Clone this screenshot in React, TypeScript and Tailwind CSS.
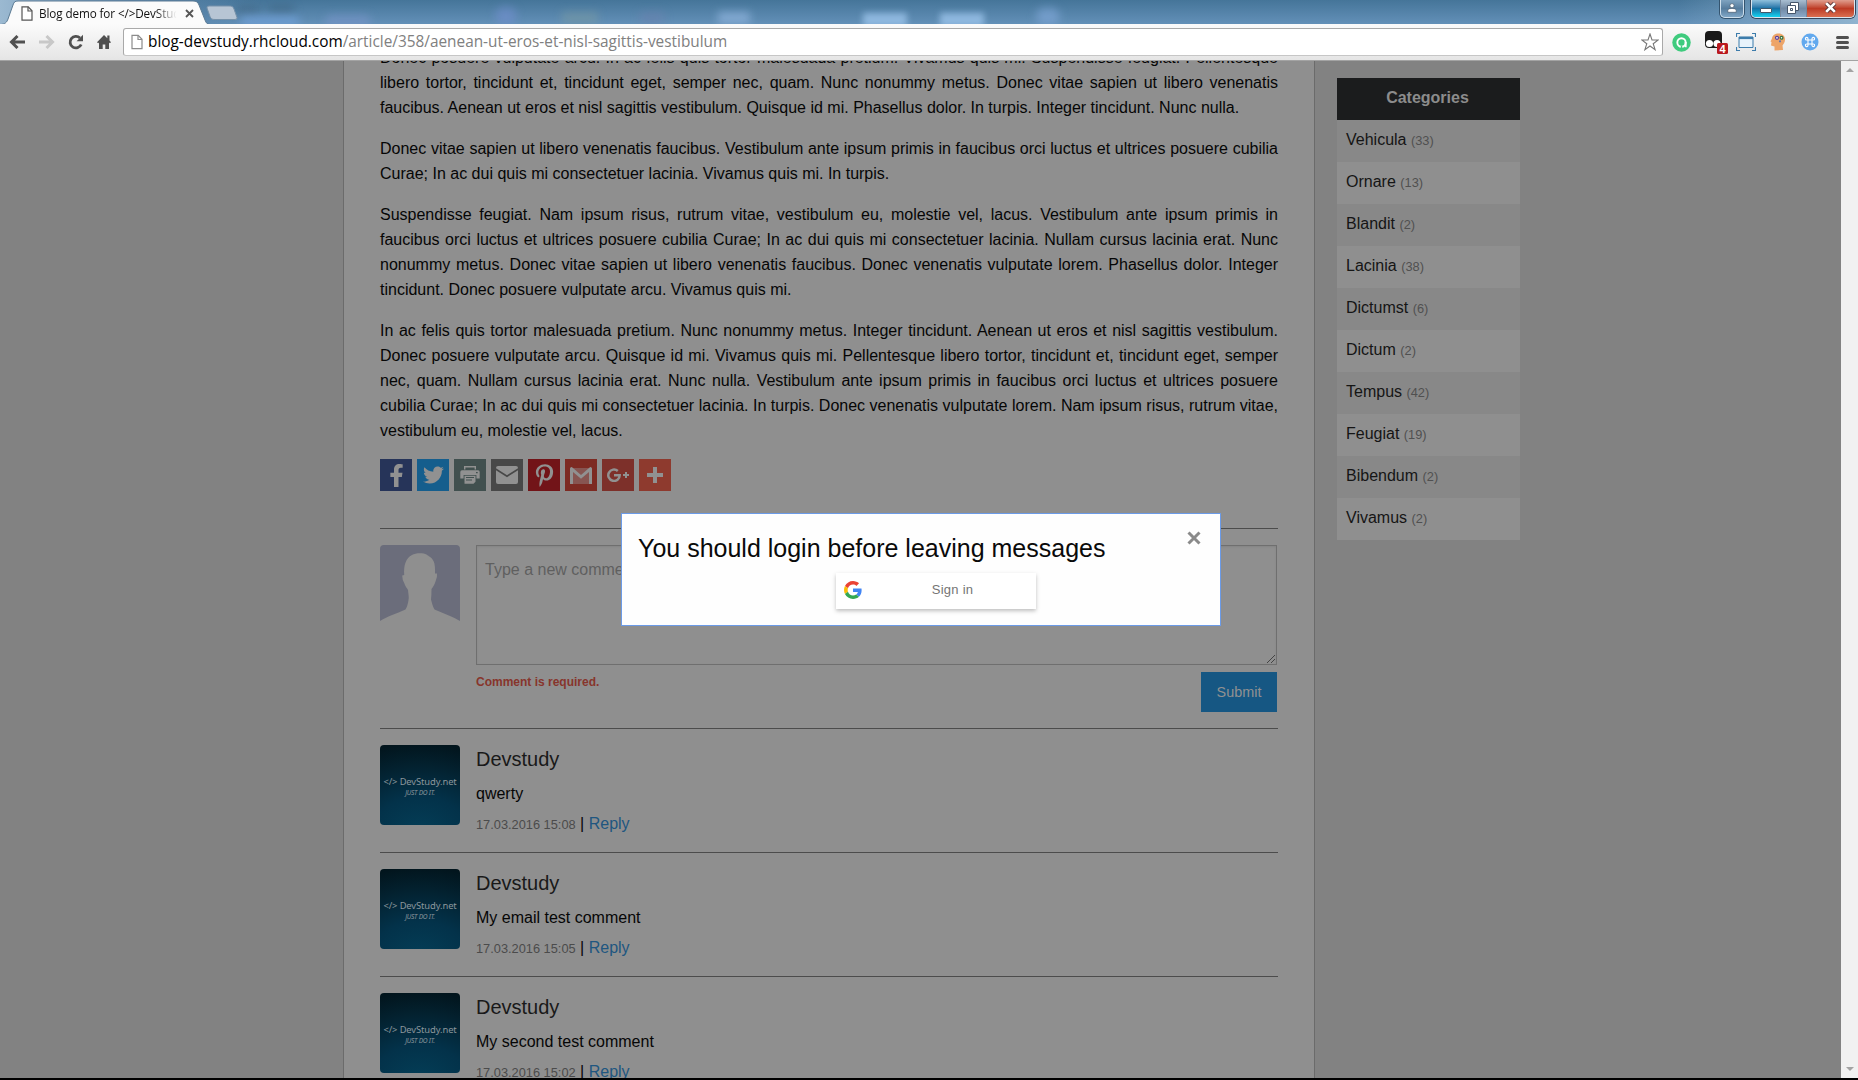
import React from 'react';
import { FaFacebookF, FaTwitter, FaPinterestP } from 'react-icons/fa';

const paragraphs: string[][] = [
  [
    'Donec posuere vulputate arcu. In ac felis quis tortor malesuada pretium. Vivamus quis mi. Suspendisse feugiat. Pellentesque',
    'libero tortor, tincidunt et, tincidunt eget, semper nec, quam. Nunc nonummy metus. Donec vitae sapien ut libero venenatis',
    'faucibus. Aenean ut eros et nisl sagittis vestibulum. Quisque id mi. Phasellus dolor. In turpis. Integer tincidunt. Nunc nulla.',
  ],
  [
    'Donec vitae sapien ut libero venenatis faucibus. Vestibulum ante ipsum primis in faucibus orci luctus et ultrices posuere cubilia',
    'Curae; In ac dui quis mi consectetuer lacinia. Vivamus quis mi. In turpis.',
  ],
  [
    'Suspendisse feugiat. Nam ipsum risus, rutrum vitae, vestibulum eu, molestie vel, lacus. Vestibulum ante ipsum primis in',
    'faucibus orci luctus et ultrices posuere cubilia Curae; In ac dui quis mi consectetuer lacinia. Nullam cursus lacinia erat. Nunc',
    'nonummy metus. Donec vitae sapien ut libero venenatis faucibus. Donec venenatis vulputate lorem. Phasellus dolor. Integer',
    'tincidunt. Donec posuere vulputate arcu. Vivamus quis mi.',
  ],
  [
    'In ac felis quis tortor malesuada pretium. Nunc nonummy metus. Integer tincidunt. Aenean ut eros et nisl sagittis vestibulum.',
    'Donec posuere vulputate arcu. Quisque id mi. Vivamus quis mi. Pellentesque libero tortor, tincidunt et, tincidunt eget, semper',
    'nec, quam. Nullam cursus lacinia erat. Nunc nulla. Vestibulum ante ipsum primis in faucibus orci luctus et ultrices posuere',
    'cubilia Curae; In ac dui quis mi consectetuer lacinia. In turpis. Donec venenatis vulputate lorem. Nam ipsum risus, rutrum vitae,',
    'vestibulum eu, molestie vel, lacus.',
  ],
];

const categories: [string, number][] = [
  ['Vehicula', 33],
  ['Ornare', 13],
  ['Blandit', 2],
  ['Lacinia', 38],
  ['Dictumst', 6],
  ['Dictum', 2],
  ['Tempus', 42],
  ['Feugiat', 19],
  ['Bibendum', 2],
  ['Vivamus', 2],
];

const comments = [
  { author: 'Devstudy', text: 'qwerty', date: '17.03.2016 15:08' },
  { author: 'Devstudy', text: 'My email test comment', date: '17.03.2016 15:05' },
  { author: 'Devstudy', text: 'My second test comment', date: '17.03.2016 15:02' },
];

function PageIcon({ className }: { className: string }) {
  return (
    <svg viewBox="0 0 12 15" className={className} fill="#fff" strokeWidth="1.2">
      <path d="M1 .8h6.2L11 4.8v9.4H1z" />
      <path d="M7 .8v4.2h4" fill="none" />
    </svg>
  );
}

function WindowButtons() {
  return (
    <div className="absolute right-[3px] top-0 flex h-[18px] items-start">
      <div className="mr-[7px] flex h-[18px] w-[24px] items-center justify-center rounded-b-[5px] border border-t-0 border-[#cfdfec] bg-gradient-to-b from-[#7fa3c0] via-[#567d9e] to-[#7fa6c6] shadow-[0_0_0_1px_#34546f]">
        <svg viewBox="0 0 10 10" className="mb-[2px] h-[10px] w-[10px]" fill="#fff" stroke="#475a6e" strokeWidth=".7">
          <circle cx="5" cy="2.7" r="2.1" />
          <path d="M.8 9.3V7.1Q.8 5.4 5 5.4t4.2 1.7v2.2z" />
        </svg>
      </div>
      <div className="flex h-[18px] overflow-hidden rounded-b-[5px] border border-t-0 border-[#dbe5ee] shadow-[0_0_0_1px_#34465c]">
        <div className="flex w-[28px] items-end justify-center bg-gradient-to-b from-[#8fc0dc] via-[#1571a5] to-[#15d3f0] pb-[4px]">
          <div className="h-[5px] w-[12px] rounded-[1px] border border-[#405769] bg-white" />
        </div>
        <div className="flex w-[27px] items-center justify-center border-x border-[#75879d] bg-gradient-to-b from-[#a9bed1] via-[#7289a4] to-[#8ba9c8]">
          <svg viewBox="0 0 13 12" className="mb-[2px] h-[12px] w-[13px]" fill="#fff" stroke="#46566b">
            <path d="M3.5.5h8v8h-8z" />
            <path d="M.5 3.5h8v8h-8zM3.500 6.500v2h2v-2z" fillRule="evenodd" />
          </svg>
        </div>
        <div className="flex w-[47px] items-center justify-center bg-gradient-to-b from-[#df9d8e] via-[#bd3a24] to-[#da6e50]">
          <svg viewBox="0 0 12 10" className="mb-[2px] h-[11px] w-[13px]">
            <path d="M2 1l8 8M10 1L2 9" stroke="#5a3436" strokeWidth="4" />
            <path d="M2 1l8 8M10 1L2 9" stroke="#fff" strokeWidth="2.5" />
          </svg>
        </div>
      </div>
    </div>
  );
}

function TitleBar() {
  return (
    <div className="relative h-[24px] overflow-hidden bg-gradient-to-b from-[#457599] to-[#6390b8]">
      <div className="absolute left-0 top-0 h-full w-[260px] bg-gradient-to-r from-[#9bb9d1] via-[#5a84a8] to-transparent" />
      <div className="absolute left-[236px] top-[6px] h-[8px] w-[24px] bg-[#35566f]/40 blur-[4px]" />
      <div className="absolute left-[268px] top-[5px] h-[8px] w-[26px] bg-[#35566f]/40 blur-[4px]" />
      <div className="absolute left-[240px] top-[16px] h-[10px] w-[60px] rounded-full bg-[#78a8e6]/60 blur-[4px]" />
      <div className="absolute left-[325px] top-[15px] h-[12px] w-[46px] rounded-full bg-[#7f98d0]/50 blur-[4px]" />
      <div className="absolute left-[495px] top-[7px] h-[18px] w-[22px] rounded-full bg-[#738fd0]/60 blur-[4px]" />
      <div className="absolute left-[562px] top-[12px] h-[12px] w-[36px] bg-[#7d9ea2]/50 blur-[4px]" />
      <div className="absolute left-[640px] top-[12px] h-[12px] w-[24px] bg-[#6b7fb0]/50 blur-[4px]" />
      <div className="absolute left-[718px] top-[12px] h-[12px] w-[32px] bg-[#93b7e0]/70 blur-[4px]" />
      <div className="absolute left-[863px] top-[13px] h-[14px] w-[44px] bg-[#93bde3]/90 blur-[3px]" />
      <div className="absolute left-[940px] top-[13px] h-[14px] w-[44px] bg-[#93bde3]/90 blur-[3px]" />
      <div className="absolute left-[1036px] top-[8px] h-[17px] w-[24px] rounded-full bg-[#83aadc]/60 blur-[4px]" />
      <div className="absolute right-0 top-0 h-full w-[180px] bg-gradient-to-l from-[#8fb3cf] to-transparent" />
      <svg viewBox="0 0 260 24" className="absolute left-0 top-0 h-[24px] w-[260px]">
        <path d="M0 24.500C5 24.500 7 22 8 19L13 5C14 2 15 1 18 1H193C196 1 198 2 199 5L205 20C206 23 207 24 210 24.500" fill="#fbfbfb" stroke="#5c7b94" />
        <path d="M207 8q-.5-2 2-2h20c3 0 4 .5 5 3l3 8.500q.5 2-2 2h-20c-3 0-4-.5-5-3z" fill="#b7c5d4" stroke="#7691a9" />
      </svg>
      <div className="absolute left-[21px] top-[5px] flex h-[16px] items-center">
        <PageIcon className="h-[15px] w-[12px] stroke-[#555]" />
        <span className="ml-[6px] w-[139px] overflow-hidden whitespace-nowrap font-['Open_Sans'] text-[11.7px] leading-[16px] tracking-[-0.1px] text-[#111] [mask-image:linear-gradient(to_right,#000_84%,transparent_99%)]">
          Blog demo for &lt;/&gt;DevStudy
        </span>
        <svg viewBox="0 0 9 9" className="ml-[7px] h-[9px] w-[9px]" stroke="#555" strokeWidth="1.8">
          <path d="M1 1l7 7M8 1L1 8" />
        </svg>
      </div>
      <WindowButtons />
    </div>
  );
}

function Toolbar() {
  return (
    <div className="flex h-[37px] items-center border-b border-[#a3a3a3] bg-gradient-to-b from-[#fbfbfb] to-[#e5e5e5] pl-[9px]">
      <svg viewBox="0 0 16 14" className="h-[14px] w-[16px]" fill="none" stroke="#505050" strokeWidth="3">
        <path d="M16 7H3M8.500 1L2.500 7l6 6" />
      </svg>
      <svg viewBox="0 0 16 14" className="ml-[14px] h-[14px] w-[16px]" fill="none" stroke="#c8c8c8" strokeWidth="3">
        <path d="M0 7h13M7.500 1l6 6-6 6" />
      </svg>
      <svg viewBox="0 0 16 16" className="ml-[13px] h-[16px] w-[16px]" fill="none" stroke="#505050" strokeWidth="2.8">
        <path d="M13.200 10.500A5.800 5.800 0 1 1 12 4" />
        <path d="M15 .8v6.400H8.600z" fill="#505050" stroke="none" />
      </svg>
      <svg viewBox="0 0 14 16" className="ml-[13px] h-[16px] w-[14px]" fill="#505050">
        <path d="M7 1L0 8.200l1.200 1L2 8.500V15h3.700v-4.500h2.600V15H12V8.500l.8.7 1.200-1L12.500 6.500V1.500h-2.200v2.800z" />
      </svg>
      <div className="ml-[12px] flex h-[28px] w-[1540px] items-center rounded-[3px] border border-[#a9a9a9] border-b-[#c6c6c6] bg-white pl-[7px] pr-[3px]">
        <PageIcon className="h-[16px] w-[12px] stroke-[#8b8b8b]" />
        <span className="ml-[5px] flex-1 whitespace-nowrap font-['Open_Sans'] text-[15.37px] leading-[24px] text-[#808080]">
          <span className="text-black">blog-devstudy.rhcloud.com</span>/article/358/aenean-ut-eros-et-nisl-sagittis-vestibulum
        </span>
        <svg viewBox="0 0 18 18" className="h-[18px] w-[18px]" fill="#fff" stroke="#777" strokeWidth="1.1">
          <path d="M9 1l2 6h6.200l-5 3.700 1.900 6L9 13l-5.100 3.700 1.900-6-5-3.700H7z" />
        </svg>
      </div>
      <svg viewBox="0 0 20 20" className="ml-[9px] h-[19px] w-[19px]">
        <circle cx="10" cy="10" r="9.7" fill="#3fcb7e" />
        <circle cx="10" cy="10" r="4.400" fill="none" stroke="#fff" strokeWidth="2" />
        <path d="M14.400 9.500v5.500" stroke="#fff" strokeWidth="2" />
        <path d="M10 13.200v3" stroke="#3fcb7e" strokeWidth="1.500" />
      </svg>
      <svg viewBox="0 0 24 24" className="ml-[13px] h-[24px] w-[24px]">
        <rect x="1" y="1" width="17" height="17" rx="4" fill="#191919" />
        <circle cx="5.500" cy="13.500" r="3.600" fill="#fff" />
        <circle cx="13" cy="13.500" r="3.600" fill="#fff" />
        <rect x="13" y="13" width="11" height="11" rx="1.5" fill="#b9191e" />
        <text x="18.500" y="22.500" fontSize="11" fontWeight="700" textAnchor="middle" fill="#fff" fontFamily="Liberation Sans">4</text>
      </svg>
      <svg viewBox="0 0 20 18" className="ml-[8px] h-[18px] w-[20px]" fill="none" stroke="#3d7cab">
        <path d="M.5 4V.5H4M16 .5h3.500V4M.5 14v3.500H4M16 17.500h3.500V14" strokeWidth="1.2" />
        <path d="M3 4h14v10.500H3z" fill="#e8f3fb" />
        <path d="M3 5h14" strokeWidth="2.2" />
      </svg>
      <svg viewBox="0 0 16 18" className="ml-[14px] h-[18px] w-[16px]">
        <path d="M4.500 17.500v-4L1 12.500 1.500 9 .5 8.500 2 5.500C2.500 2 5 .5 8.500.5c4 0 6.500 2.500 6.500 6 0 3-1.500 4.500-2.500 6l.5 4.500z" fill="#eda468" />
        <circle cx="7" cy="4.800" r="1.500" fill="#fff" stroke="#5c3c9b" strokeWidth="1.200" />
        <circle cx="11.500" cy="4.800" r="1.400" fill="#fff" stroke="#327341" strokeWidth="1.200" />
        <circle cx="10" cy="8.300" r="1.100" fill="#5670b4" />
      </svg>
      <svg viewBox="0 0 18 18" className="ml-[15px] h-[18px] w-[18px]">
        <circle cx="9" cy="9" r="8.500" fill="#62a9ee" />
        <path d="M7 7h4v4H7zM7 7H5.700A1.300 1.300 0 1 1 7 5.700zM11 7V5.700A1.300 1.300 0 1 1 12.300 7zM7 11v1.300A1.300 1.300 0 1 1 5.700 11zM11 11h1.300a1.300 1.300 0 1 1-1.300 1.300z" fill="none" stroke="#fff" strokeWidth="1.1" />
      </svg>
      <div className="ml-[17px] flex w-[13px] flex-col gap-[2px]">
        <div className="h-[3px] rounded-sm bg-[#505050]" />
        <div className="h-[3px] rounded-sm bg-[#505050]" />
        <div className="h-[3px] rounded-sm bg-[#505050]" />
      </div>
    </div>
  );
}

function ShareIcons() {
  const box = 'flex h-8 w-8 items-center justify-center';
  return (
    <div className="mt-4 flex gap-[5px] text-[#919191]">
      <div className={`${box} bg-[#263459]`}>
        <FaFacebookF className="h-[23px] w-[17px]" />
      </div>
      <div className={`${box} bg-[#155e8d]`}>
        <FaTwitter className="h-[22px] w-[21px]" />
      </div>
      <div className={`${box} bg-[#41504f]`}>
        <svg viewBox="0 0 20 18" className="h-[18px] w-[20px]" fill="currentColor">
          <path d="M4 0h12v3.500h-1.400V1.400H5.400v2.100H4z" />
          <path fillRule="evenodd" d="M2 4.300h16a1.700 1.700 0 0 1 1.700 1.700v6.500h-3.300V9H3.600v3.500H.3V6A1.700 1.700 0 0 1 2 4.300zM16 6v1.200h1.700V6z" />
          <path fillRule="evenodd" d="M4.500 9.700h11v6L13.500 17.700h-9zM6 11v1h8v-1zM6 13.500v1h6v-1z" />
        </svg>
      </div>
      <div className={`${box} bg-[#484848]`}>
        <svg viewBox="0 0 22 18" className="h-[18px] w-[22px]">
          <rect width="22" height="18" rx="2" fill="#919191" />
          <path d="M-.5 3L11 10.200 22.500 3" fill="none" stroke="#484848" strokeWidth="1.7" />
        </svg>
      </div>
      <div className={`${box} bg-[#721418]`}>
        <FaPinterestP className="h-[23px] w-[19px]" />
      </div>
      <div className={`${box} bg-[#7d2a22]`}>
        <svg viewBox="0 0 22 17" className="mt-[1px] h-[17px] w-[22px]">
          <path d="M2 1h18v16H2z" fill="#875551" />
          <path d="M0 17V1.500Q0 0 1.800 0L11 8 20.200 0Q22 0 22 1.500V17h-3V5l-8 6.700L3 5v12z" fill="#919191" />
        </svg>
      </div>
      <div className={`${box} bg-[#7d302a]`}>
        <svg viewBox="0 0 22 14" className="h-[14px] w-[22px]" fill="none" stroke="#919191">
          <path d="M10.800 3A5.700 5.700 0 1 0 12.700 7.200H7" strokeWidth="2.5" />
          <path d="M19 4v6M16 7h6" strokeWidth="2" />
        </svg>
      </div>
      <div className={`${box} bg-[#8e3a2e]`}>
        <svg viewBox="0 0 16 16" className="h-4 w-4" stroke="#919191" strokeWidth="4">
          <path d="M8 0v16M0 8h16" />
        </svg>
      </div>
    </div>
  );
}

function BlankAvatar() {
  return (
    <svg viewBox="0 0 80 80" className="h-20 w-20 shrink-0">
      <path d="M0 4a4 4 0 0 1 4-4H76a4 4 0 0 1 4 4V76Q75 73 70 71L54.500 64.500C52.500 61 52 58 51 54.500Q51.500 50 51.500 44C53 42 54.500 39.500 55.500 36.500Q57.500 32 57 28.500L55 28.500C55.200 24 55 19 53.500 16C51.500 12 49 11.500 46.500 9.500C43 7.500 35 8 32 10C26 13 23.500 20 24.200 30L22.200 30.500Q22.300 35 24.200 38C25 41 27 43 28 45C28.500 50 29.200 53 28.500 55C28 59 27 62 25.500 64.500C16 69 8 71 0 76z" fill="#6b6d7b" />
    </svg>
  );
}

function DevAvatar() {
  return (
    <div className="flex h-20 w-20 shrink-0 flex-col items-center overflow-hidden rounded-[4px] bg-[radial-gradient(120px_90px_at_50%_110%,#043e57_0%,#03324a_40%,#03212f_75%,#02151d_100%)] pt-[30px] text-[#8b969c]">
      <span className="whitespace-nowrap font-['Noto_Sans'] text-[9.4px] leading-[14px] tracking-[-0.1px]">&lt;/&gt; DevStudy.net</span>
      <span className="whitespace-nowrap font-['Noto_Sans'] text-[6.6px] italic leading-[8px] tracking-[-0.25px]">JUST DO IT.</span>
    </div>
  );
}

function CommentForm() {
  return (
    <div className="mt-[37px] flex h-[200px] gap-4 border-t border-[#4c4c4c] pt-4">
      <BlankAvatar />
      <div className="flex-1">
        <div className="relative h-[120px] w-[801px] border border-[#6f6f6f] px-2 py-[11px] leading-[25px] text-[#5f5f5f] shadow-[inset_0_1px_2px_rgba(10,10,10,0.08)]">
          Type a new comment
          <svg viewBox="0 0 8 8" className="absolute bottom-[1px] right-[1px] h-[8px] w-[8px]" stroke="#444" strokeWidth="1">
            <path d="M0 8L8 0M4 8l4-4" />
          </svg>
        </div>
        <div className="flex w-[801px] justify-between">
          <span className="pt-[8px] text-[12px] font-bold leading-[18px] text-[#87352c]">Comment is required.</span>
          <button className="mt-[7px] h-10 w-[76px] bg-[#165783] pt-[2px] text-[14.4px] text-[#919191]">Submit</button>
        </div>
      </div>
    </div>
  );
}

function CommentItem({ author, text, date }: { author: string; text: string; date: string }) {
  return (
    <div className="flex h-[124px] gap-4 border-t border-[#4c4c4c] pt-4">
      <DevAvatar />
      <div>
        <div className="text-[20px] leading-[28px] text-[#191919]">{author}</div>
        <div className="mt-[8px] leading-[25px]">{text}</div>
        <div className="mt-[5px] leading-[25px]">
          <span className="text-[12.8px] text-[#4b4b4b]">{date}</span> <span>|</span>{' '}
          <span className="text-[#205680]">Reply</span>
        </div>
      </div>
    </div>
  );
}

function Sidebar() {
  return (
    <aside className="ml-[22px] mt-[17px] w-[183px]">
      <div className="h-[42px] bg-[#1b1c1d] pr-[2px] text-center font-bold leading-[39px] text-[#8c8c8c]">Categories</div>
      {categories.map(([name, count]) => (
        <div key={name} className="h-[42px] pl-[9px] leading-[39px] text-[#151515] odd:bg-[#8f8f8f] even:bg-[#888888]">
          {name} <span className="text-[12.8px] text-[#505050]">({count})</span>
        </div>
      ))}
    </aside>
  );
}

function LoginModal() {
  return (
    <div className="absolute left-[621px] top-[452px] h-[113px] w-[600px] border border-[#6b9be8] bg-[#fefefe] px-4 pt-[17px]">
      <div className="whitespace-nowrap text-[25px] leading-[34px] text-[#0a0a0a]">You should login before leaving messages</div>
      <svg viewBox="0 0 14 14" className="absolute right-[19px] top-[17px] h-[14px] w-[14px]" stroke="#8a8a8a" strokeWidth="3">
        <path d="M1.500 1.500l11 11M12.500 1.500l-11 11" />
      </svg>
      <div className="ml-[198px] mt-[8px] flex h-[36px] w-[200px] items-center bg-white pb-[2px] pl-[8px] shadow-[0_2px_4px_0_rgba(0,0,0,0.25)]">
        <svg viewBox="0 0 48 48" className="h-[18px] w-[18px]">
          <path fill="#EA4335" d="M24 9.500c3.540 0 6.710 1.220 9.210 3.600l6.850-6.850C35.900 2.380 30.470 0 24 0 14.620 0 6.510 5.380 2.560 13.220l7.980 6.190C12.430 13.720 17.740 9.500 24 9.500z" />
          <path fill="#4285F4" d="M46.980 24.550c0-1.570-.15-3.090-.38-4.550H24v9.020h12.940c-.58 2.960-2.260 5.480-4.780 7.180l7.730 6c4.510-4.180 7.090-10.360 7.090-17.650z" />
          <path fill="#FBBC05" d="M10.530 28.590c-.48-1.450-.76-2.990-.76-4.590s.27-3.140.76-4.590l-7.980-6.190C.92 16.460 0 20.120 0 24c0 3.880.92 7.540 2.560 10.780l7.970-6.190z" />
          <path fill="#34A853" d="M24 48c6.480 0 11.930-2.130 15.890-5.810l-7.730-6c-2.150 1.450-4.920 2.300-8.160 2.300-6.260 0-11.570-4.220-13.470-9.910l-7.980 6.190C6.510 42.620 14.620 48 24 48z" />
        </svg>
        <span className="flex-1 pl-[7px] text-center text-[13px] tracking-[0.25px] text-[#757575]">Sign in</span>
      </div>
    </div>
  );
}

function Scrollbar() {
  return (
    <div className="flex w-[17px] flex-col items-center justify-between bg-[#f1f1f1] py-[7px]">
      <div className="h-0 w-0 border-x-4 border-b-4 border-x-transparent border-b-[#a3a3a3]" />
      <div className="h-0 w-0 border-x-4 border-t-4 border-x-transparent border-t-[#a3a3a3]" />
    </div>
  );
}

export default function App() {
  return (
    <div className="flex h-[1080px] w-[1858px] flex-col overflow-hidden bg-black pb-[2px] font-['Liberation_Sans',sans-serif] text-[16px] text-[#060606]">
      <TitleBar />
      <Toolbar />
      <div className="relative flex min-h-0 flex-1 overflow-hidden bg-[#828282]">
        <div className="flex min-h-0 flex-1 overflow-hidden pl-[343px]">
          <main className="h-[1100px] w-[972px] shrink-0 border-x border-[#6b6b6b] bg-[#8f8f8f] px-9">
            <div className="-mt-4 flex flex-col gap-4">
              {paragraphs.map((lines, i) => (
                <div key={i} className="leading-[25px]">
                  {lines.map((line, j) => (
                    <div
                      key={j}
                      className={j < lines.length - 1 ? 'whitespace-nowrap [text-align-last:justify]' : 'whitespace-nowrap'}
                    >
                      {line}
                    </div>
                  ))}
                </div>
              ))}
            </div>
            <ShareIcons />
            <CommentForm />
            {comments.map((c) => (
              <CommentItem key={c.date} {...c} />
            ))}
          </main>
          <Sidebar />
        </div>
        <Scrollbar />
        <LoginModal />
      </div>
    </div>
  );
}
